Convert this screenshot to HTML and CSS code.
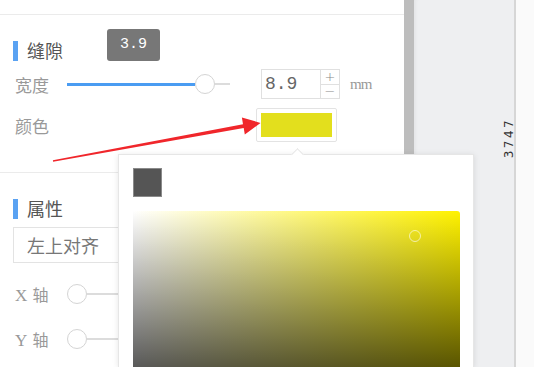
FILE: index.html
```html
<!DOCTYPE html>
<html lang="zh">
<head>
    <meta charset="UTF-8">
    <meta name="viewport" content="width=device-width, initial-scale=1.0">
    <title>缝隙颜色</title>
    <link rel="stylesheet" href="styles.css">
</head>
<body>
    <div class="app">
        <aside class="panel">
            <div class="panel-top"></div>

            <section class="group group-gap">
                <h3 class="group-title"><span class="bar"></span>缝隙</h3>
                <div class="row">
                    <label class="row-label">宽度</label>
                    <div class="slider">
                        <span class="slider-fill"></span>
                        <span class="slider-thumb"></span>
                        <span class="slider-rest"></span>
                    </div>
                    <div class="number">
                        <input class="number-input" type="text" value="8.9">
                        <div class="number-spin">
                            <span>+</span>
                            <span>−</span>
                        </div>
                    </div>
                    <span class="unit">mm</span>
                </div>
                <div class="row row-color">
                    <label class="row-label">颜色</label>
                    <div class="swatch"><span class="swatch-color"></span></div>
                </div>
            </section>

            <section class="group group-attr">
                <h3 class="group-title"><span class="bar"></span>属性</h3>
                <div class="select">左上对齐</div>
                <div class="row row-axis">
                    <label class="row-label axis-label"><span class="axis-letter">X</span> 轴</label>
                    <div class="axis-slider">
                        <span class="slider-thumb"></span>
                        <span class="axis-rest"></span>
                    </div>
                </div>
                <div class="row row-axis">
                    <label class="row-label axis-label"><span class="axis-letter">Y</span> 轴</label>
                    <div class="axis-slider">
                        <span class="slider-thumb"></span>
                        <span class="axis-rest"></span>
                    </div>
                </div>
            </section>
        </aside>

        <div class="scrollbar"></div>

        <main class="canvas">
            <div class="ruler"></div>
            <span class="ruler-label">3747</span>
        </main>
    </div>

    <div class="tooltip">3.9</div>

    <div class="picker">
        <span class="picker-arrow"></span>
        <div class="picker-current"></div>
        <div class="picker-field">
            <span class="picker-cursor"></span>
        </div>
    </div>

    <svg class="annotation" width="534" height="367" viewBox="0 0 534 367">
        <polygon fill="#f0262b" points="52.9,160.3 243.0,124.2 241.9,117.4 260.5,122.9 244.8,134.6 243.7,128.0 53.1,161.7"/>
    </svg>
</body>
</html>
```

FILE: styles.css
```css
body {
    margin: 0;
    padding: 0;
    width: 534px;
    height: 367px;
    overflow: hidden;
    position: relative;
    font-family: "Noto Sans CJK SC", "Liberation Sans", sans-serif;
    background: #eeeff1;
}
.app {
    display: flex;
    height: 367px;
}
.panel {
    width: 404px;
    background: #fff;
}
.panel-top {
    height: 14px;
    border-bottom: 1px solid #ebebeb;
}
.group {
    padding: 25px 0 0 13px;
}
.group-gap {
    padding-bottom: 30px;
    border-bottom: 1px solid #ebebeb;
}
.group-attr {
    padding-top: 25px;
    padding-right: 14px;
}
.group-title {
    display: flex;
    align-items: center;
    gap: 9px;
    margin: 0;
    height: 21px;
    font-size: 18px;
    line-height: 21px;
    font-weight: normal;
    color: #555;
}
.bar {
    width: 5px;
    height: 20px;
    background: #5aa2f2;
}
.row {
    display: flex;
    align-items: center;
    height: 30px;
    margin-top: 8px;
    padding-left: 2px;
}
.row-label {
    width: 52px;
    font-size: 17px;
    color: #999;
}
.slider {
    display: flex;
    align-items: center;
    width: 163px;
}
.slider-fill {
    width: 128px;
    height: 3px;
    background: #4a9cf2;
}
.slider-thumb {
    box-sizing: border-box;
    width: 20px;
    height: 20px;
    border: 1.5px solid #d4d4d4;
    border-radius: 50%;
    background: #fff;
}
.slider-rest {
    flex: 1;
    height: 2px;
    background: #dcdcdc;
}
.number {
    display: flex;
    margin-left: 31px;
    height: 30px;
}
.number-input {
    box-sizing: border-box;
    width: 59px;
    height: 30px;
    margin: 0;
    padding: 0 0 0 3px;
    border: 1px solid #e0e0e0;
    border-right: none;
    font-family: "Liberation Mono", monospace;
    font-size: 18px;
    color: #666;
    outline: none;
}
.number-spin {
    display: flex;
    flex-direction: column;
    box-sizing: border-box;
    width: 20px;
    border: 1px solid #e0e0e0;
}
.number-spin span {
    flex: 1;
    display: flex;
    align-items: center;
    justify-content: center;
    font-family: "DejaVu Sans", sans-serif;
    font-size: 13px;
    font-weight: 200;
    line-height: 13px;
    color: #888;
}
.number-spin span + span {
    border-top: 1px solid #e0e0e0;
}
.unit {
    margin-left: 10px;
    font-family: "Liberation Serif", serif;
    font-size: 15px;
    color: #999;
    letter-spacing: -1px;
}
.row-color {
    height: 34px;
    margin-top: 9px;
}
.swatch {
    box-sizing: border-box;
    width: 81px;
    height: 34px;
    margin-left: 189px;
    padding: 4px;
    border: 1px solid #e3e3e3;
    border-radius: 2px;
}
.swatch-color {
    display: block;
    height: 100%;
    background: #e3df1d;
}
.select {
    box-sizing: border-box;
    height: 36px;
    margin-top: 8px;
    padding-left: 13px;
    border: 1px solid #e3e3e3;
    font-size: 18px;
    line-height: 34px;
    color: #777;
}
.row-axis {
    margin-top: 16px;
}
.row-axis + .row-axis {
    margin-top: 15px;
}
.axis-label {
    font-size: 16px;
    color: #999;
}
.axis-letter {
    display: inline-block;
    width: 14px;
    font-family: "Liberation Serif", serif;
    font-size: 17px;
}
.axis-slider {
    display: flex;
    align-items: center;
    flex: 1;
}
.axis-rest {
    flex: 1;
    height: 2px;
    background: #dcdcdc;
}
.scrollbar {
    width: 10px;
    background: #bdbdbd;
}
.canvas {
    flex: 1;
    display: flex;
    justify-content: flex-end;
    position: relative;
    background: #eeeff1;
    box-shadow: inset 4px 0 4px -3px rgba(0, 0, 0, 0.06);
}
.ruler {
    width: 18px;
    background: #fafafa;
    border-left: 2px solid #d6d6d6;
}
.ruler-label {
    position: absolute;
    left: 74px;
    top: 130px;
    width: 42px;
    transform: rotate(-90deg);
    font-family: "DejaVu Sans", sans-serif;
    font-size: 12px;
    line-height: 16px;
    letter-spacing: 2.5px;
    text-align: center;
    color: #333;
}
.tooltip {
    position: absolute;
    left: 107px;
    top: 29px;
    width: 53px;
    height: 32px;
    border-radius: 3px;
    background: #777;
    color: #fff;
    font-family: "Liberation Mono", monospace;
    font-size: 15px;
    line-height: 32px;
    text-align: center;
}
.picker {
    position: absolute;
    left: 118px;
    top: 154px;
    width: 356px;
    height: 213px;
    box-sizing: border-box;
    border: 1px solid #e6e6e6;
    border-bottom: none;
    background: #fff;
    box-shadow: 0 1px 6px rgba(0, 0, 0, 0.1);
}
.picker-arrow {
    position: absolute;
    left: 174px;
    top: -5px;
    width: 8px;
    height: 8px;
    background: #fff;
    border-left: 1px solid #e6e6e6;
    border-top: 1px solid #e6e6e6;
    transform: rotate(45deg);
}
.picker-current {
    width: 29px;
    height: 29px;
    margin: 13px 0 0 14px;
    box-sizing: border-box;
    border: 1px solid #8a8a8a;
    background: #555;
}
.picker-field {
    position: relative;
    width: 327px;
    height: 156px;
    margin: 14px 0 0 14px;
    border-radius: 3px 3px 0 0;
    background:
        linear-gradient(to bottom, rgba(0, 0, 0, 0), rgba(0, 0, 0, 0.65)),
        linear-gradient(to right, #fff, #fff200);
}
.picker-cursor {
    position: absolute;
    left: 276px;
    top: 19px;
    width: 12px;
    height: 12px;
    box-sizing: border-box;
    border: 1.5px solid rgba(255, 255, 255, 0.6);
    border-radius: 50%;
}
.annotation {
    position: absolute;
    left: 0;
    top: 0;
    pointer-events: none;
}
```
